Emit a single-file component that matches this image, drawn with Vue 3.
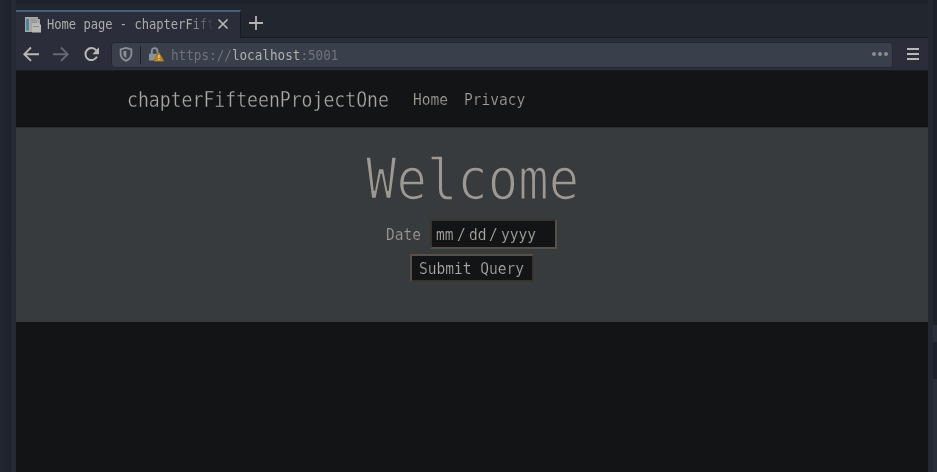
<script setup>
const navLinks = ['Home', 'Privacy']
</script>

<template>
  <div class="desktop">
    <div class="left-edge"></div>
    <main class="window">
      <header class="tabs">
        <div class="tab">
          <svg class="favicon" viewBox="0 0 16 16">
            <path d="M0 0h6v15H0z" fill="#a3a9ab" />
            <path d="M1.2 2h2.6v11.5H1.2z" fill="#457f9b" />
            <path d="M5 0h8v2h2v13H5z" fill="#a5a4a2" />
            <path d="M7 5h6l3 3v7.5H7z" fill="#b9b8b5" />
            <path d="M6 3h5M7 5.5h5M8 9.5h6" stroke="#8f9090" />
          </svg>
          <div class="tab-title"><span class="mono">Home page - chapterFift</span></div>
          <svg class="close" viewBox="0 0 12 12"><path d="M1.5 1.5l9 9M10.5 1.5l-9 9" /></svg>
        </div>
        <svg class="plus" viewBox="0 0 14 14"><path d="M7 0v14M0 7h14" /></svg>
      </header>
      <div class="toolbar">
        <svg class="nav-icon" viewBox="0 0 16 16"><path d="M8 .5L1.3 7.2 8 13.9M1.5 7.2H16" /></svg>
        <svg class="nav-icon forward" viewBox="0 0 16 16"><path d="M8 .5l6.7 6.7L8 13.9M14.5 7.2H0" /></svg>
        <svg class="nav-icon reload" viewBox="0 0 16 16">
          <path d="M12.2 3.4A6 6 0 1 0 12.9 9.6" />
          <path class="solid" d="M15 .3v6.9H8.3z" />
        </svg>
        <div class="address">
          <svg class="shield" viewBox="0 0 14 15">
            <path d="M7 .9l5.4 1.5v4.4C12.4 10.2 10.4 12.4 7 13.8 3.6 12.4 1.6 10.2 1.6 6.8V2.4z" fill="none" stroke="#8d9096" stroke-width="1.8" />
            <path d="M7.3 3.8v7.2C5.1 9.9 4.4 8.6 4.4 6.8V4.3z" fill="#8d9096" />
          </svg>
          <i class="divider"></i>
          <svg class="lock" viewBox="0 0 15 15">
            <path d="M2.8 8V3.9a2.8 2.8 0 0 1 5.6 0V6.5" fill="none" stroke="#8d9096" stroke-width="1.9" />
            <path d="M0 6.7h8.5L5 13.6H0z" fill="#8d9096" />
            <path d="M9.9 5.8L14.4 13.9H5.4z" fill="#c08712" stroke="#c08712" stroke-linejoin="round" />
            <path d="M9.9 8v3M9.9 12v1.3" stroke="#e0d8c8" stroke-width="1.2" />
          </svg>
          <div class="url"><span class="mono">https://<b>localhost</b>:5001</span></div>
          <svg class="dots" viewBox="0 0 16 4"><circle cx="2" cy="2" r="2" /><circle cx="8" cy="2" r="2" /><circle cx="14" cy="2" r="2" /></svg>
        </div>
        <svg class="menu" viewBox="0 0 12 12"><path d="M0 1h12M0 6h12M0 11h12" /></svg>
      </div>
      <nav class="site-nav">
        <div class="brand"><span class="mono">chapterFifteenProjectOne</span></div>
        <div v-for="link in navLinks" :key="link" class="link" :class="link.toLowerCase()">
          <span class="mono">{{ link }}</span>
        </div>
      </nav>
      <section class="content">
        <h1><span class="mono">Welcome</span></h1>
        <div class="date-row">
          <div class="label"><span class="mono">Date</span></div>
          <div class="date-input">
            <div class="part"><span class="mono">mm</span></div>
            <div class="slash"><span class="mono">/</span></div>
            <div class="part"><span class="mono">dd</span></div>
            <div class="slash"><span class="mono">/</span></div>
            <div class="part"><span class="mono">yyyy</span></div>
          </div>
        </div>
        <div class="submit"><span class="mono">Submit Query</span></div>
      </section>
    </main>
    <aside class="right-edge">
      <i class="thumb"></i>
      <i class="gap"></i>
      <i class="track"></i>
    </aside>
  </div>
</template>

<style>
body { margin: 0; overflow: hidden; background: #22262f; }
</style>

<style scoped>
* { box-sizing: border-box; }
svg { display: block; flex: none; fill: none; }
.desktop {
  display: flex;
  width: 937px;
  height: 472px;
  background: linear-gradient(#1e222b 4px, #22272f 4px);
  font-family: "DejaVu Sans Mono", monospace;
  overflow: hidden;
}
.left-edge {
  width: 16px;
  background: linear-gradient(90deg, #222731 0, #1d212a 11px, #252a34 11px);
}
.window { width: 912px; height: 472px; display: flex; flex-direction: column; background: #131416; }
.mono {
  display: inline-block;
  white-space: pre;
  transform: scaleX(0.887);
  transform-origin: 0 50%;
}
.tabs { height: 38px; padding-top: 10px; display: flex; background: linear-gradient(#1e222b 4px, #22272f 4px, #22272f 37px, #181b23 37px); }
.tab {
  width: 225px;
  height: 28px;
  padding-left: 9px;
  display: flex;
  align-items: center;
  background: #2b2e3a;
  border-top: 2px solid #445f80;
  border-right: 1px solid #181b23;
}
.favicon { width: 16px; height: 16px; margin-bottom: 1px; }
.tab-title {
  width: 167px;
  margin: 0 0 2px 6px;
  overflow: hidden;
  font-size: 13.65px;
  line-height: 20px;
  color: #adaca9;
  -webkit-mask-image: linear-gradient(90deg, #000 142px, transparent 167px);
  mask-image: linear-gradient(90deg, #000 142px, transparent 167px);
}
.close { width: 12px; height: 12px; margin: 0 0 2px 3px; stroke: #b8b6b3; stroke-width: 1.7; }
.plus { width: 14px; height: 14px; margin: 6px 0 0 8px; stroke: #b5b4b2; stroke-width: 1.8; }
.toolbar {
  height: 33px;
  padding: 0 9px 0 7px;
  display: flex;
  align-items: center;
  background: linear-gradient(#2b2e3a 32px, #191c23 32px);
}
.nav-icon { width: 16px; height: 16px; margin-right: 14px; stroke: #bab8b5; stroke-width: 1.9; overflow: visible; }
.forward { stroke: #666972; }
.reload { margin: 0 12px 0 1px; stroke-width: 2; }
.solid { fill: #bab8b5; stroke: none; }
.address {
  width: 782px;
  height: 26px;
  margin-left: -1px;
  padding: 0 4px 0 7px;
  display: flex;
  align-items: center;
  background: #39404c;
  border: 1px solid #232731;
  border-radius: 4px;
}
.shield { width: 14px; height: 15px; }
.divider { width: 1px; height: 18px; margin: 0 8px 0 7px; background: #1c2028; }
.lock { width: 15px; height: 15px; }
.url { width: 168px; margin-left: 7px; font-size: 14.25px; line-height: 22px; color: #6e737b; }
.url b { font-weight: 400; color: #b0afac; }
.dots { width: 16px; height: 4px; margin: 0 0 2px auto; fill: #8d8e91; }
.menu { width: 12px; height: 12px; margin: 0 0 1px 14px; stroke: #bab8b5; stroke-width: 2; }
.site-nav {
  height: 56px;
  padding: 1px 0 0 111px;
  display: flex;
  align-items: center;
  background: #131416;
  color: #a19e98;
}
.brand { width: 262px; font-size: 20.45px; line-height: 30px; color: #aaa8a3; -webkit-text-stroke: 0.35px #131416; }
.link { font-size: 16.4px; line-height: 24px; -webkit-text-stroke: 0.2px #131416; }
.home { width: 35px; margin-left: 24px; }
.privacy { width: 62px; margin-left: 16px; }
.content {
  height: 195px;
  display: flex;
  flex-direction: column;
  align-items: center;
  background: #383b3d;
  border-top: 1px solid #2c2e30;
  color: #9d9992;
}
h1 {
  width: 213px;
  height: 72px;
  margin: 15px 0 0;
  font-size: 57px;
  font-weight: 400;
  line-height: 72px;
  -webkit-text-stroke: 1.6px #383b3d;
}
.date-row {
  width: 172px;
  height: 30px;
  margin-top: 4px;
  display: flex;
  align-items: center;
  font-size: 16.4px;
  line-height: 24px;
}
.label { width: 35px; padding-top: 2px; -webkit-text-stroke: 0.2px #383b3d; }
.date-input {
  width: 127px;
  height: 30px;
  margin-left: 9px;
  padding: 2px 0 0 4px;
  display: flex;
  align-items: center;
  background: #131416;
  border: 2px solid;
  border-color: #383530 #565048 #565048 #383530;
  color: #aaa8a3;
  -webkit-text-stroke: 0.2px #131416;
}
.part { width: 18px; }
.slash { width: 9px; margin: 0 2.75px; }
.submit {
  width: 124px;
  height: 28px;
  margin-top: 5px;
  padding: 1px 0 0 7px;
  background: #131416;
  border: 2px solid;
  border-color: #565048 #383530 #383530 #565048;
  color: #aaa8a3;
  font-size: 16.4px;
  line-height: 24px;
  -webkit-text-stroke: 0.2px #131416;
}
.right-edge {
  width: 9px;
  padding: 325px 0 0 5px;
  display: flex;
  flex-direction: column;
  background: linear-gradient(90deg, #232832 5px, #1d212a 5px);
}
.thumb { height: 17px; background: #2b2f3a; }
.gap { height: 37px; background: #1c222b; }
.track { flex: 1; background: #2a2e39; }
</style>
